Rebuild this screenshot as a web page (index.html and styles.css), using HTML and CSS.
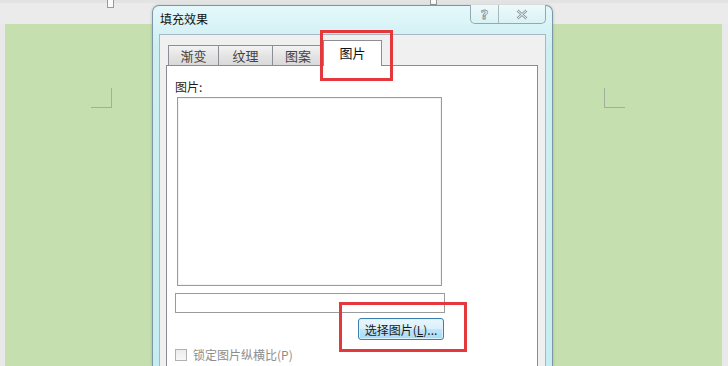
FILE: index.html
```html
<!DOCTYPE html>
<html>

<head>
    <title>填充效果</title>
    <link rel="stylesheet" href="styles.css">
</head>

<body>
    <div class="ruler">
        <span class="marker"></span>
        <span class="marker marker-right"></span>
    </div>

    <div class="page">
        <span class="corner corner-left"></span>
        <span class="corner corner-right"></span>
    </div>

    <!-- dialog window over the document -->
    <div class="dialog">
        <div class="titlebar">
            <span class="title">填充效果</span>
            <div class="caption-btns">
                <span class="cap-btn help">?</span>
                <span class="cap-btn close">
                    <svg width="12" height="11" viewBox="0 0 12 11">
                        <path d="M1.5 1.5 L10.5 9.5 M10.5 1.5 L1.5 9.5" stroke="#8e9aa2" stroke-width="2.6" fill="none" />
                        <path d="M1.5 1.5 L10.5 9.5 M10.5 1.5 L1.5 9.5" stroke="#f4f8f9" stroke-width="1" fill="none" />
                    </svg>
                </span>
            </div>
        </div>

        <div class="client">
            <div class="tabs">
                <span class="tab t1">渐变</span>
                <span class="tab t2">纹理</span>
                <span class="tab t3">图案</span>
                <span class="tab active">图片</span>
            </div>
            <div class="panel">
                <div class="label">图片:</div>
                <div class="preview"></div>
                <div class="textbox"></div>
                <button class="pick-btn">选择图片(<u>L</u>)...</button>
                <div class="check-row">
                    <span class="checkbox"></span>
                    <span class="check-label">锁定图片纵横比(P)</span>
                </div>
            </div>
        </div>
    </div>

    <!-- highlight boxes -->
    <div class="highlight hl-tab"></div>
    <div class="highlight hl-btn"></div>
</body>

</html>
```

FILE: styles.css
```css
/* Base */
body {
    margin: 0;
    width: 728px;
    height: 366px;
    overflow: hidden;
    position: relative;
    background: #e9e9e9;
    font-family: "Noto Sans CJK SC", "Noto Sans", sans-serif;
    font-size: 12px;
    color: #1e1e1e;
}

/* Top ruler strip */
.ruler {
    height: 24px;
    display: flex;
    align-items: flex-start;
    padding-left: 107px;
    box-sizing: border-box;
    background: linear-gradient(#e3e3e3 0, #e3e3e3 3px, #ebebeb 3px);
}

.marker {
    width: 5px;
    height: 7px;
    border: 1px solid #9a9a9a;
    border-top: none;
    background: #fafafa;
}

.marker-right {
    margin-left: 316px;
    height: 4px;
}

/* Green document page */
.page {
    height: 342px;
    margin: 0 6px 0 5px;
    background: #c5dfae;
    display: flex;
    justify-content: space-between;
    align-items: flex-start;
    padding: 64px 97px 0 86px;
    box-sizing: border-box;
}

.corner {
    width: 20px;
    height: 19px;
    border-bottom: 1px solid #a2aea0;
}

.corner-left {
    border-right: 1px solid #a2aea0;
}

.corner-right {
    border-left: 1px solid #a2aea0;
}

/* Dialog window */
.dialog {
    position: absolute;
    left: 152px;
    top: 5px;
    width: 401px;
    height: 361px;
    box-sizing: border-box;
    border: 1px solid #7f97a3;
    border-bottom: none;
    border-radius: 7px 7px 0 0;
    background: linear-gradient(#e4f8fa, #cdeff3 40px, #c6edf1);
    padding: 0 6px;
    display: flex;
    flex-direction: column;
    box-shadow: 0 0 3px rgba(80, 110, 120, 0.35);
}

.titlebar {
    height: 28px;
    display: flex;
    justify-content: space-between;
    align-items: flex-start;
    flex-shrink: 0;
}

.title {
    margin-top: 4px;
    padding-left: 1px;
    font-size: 12px;
    line-height: 17px;
    color: #111;
}

.caption-btns {
    display: flex;
    margin-top: -1px;
    height: 18px;
    border: 1px solid #95a8b2;
    border-top: none;
    border-radius: 0 0 5px 5px;
    background: linear-gradient(#eefafb, #d9f2f4);
    overflow: hidden;
}

.cap-btn {
    display: flex;
    align-items: center;
    justify-content: center;
}

.help {
    width: 27px;
    border-right: 1px solid #a8b9c1;
    font-family: "DejaVu Sans", sans-serif;
    font-size: 13px;
    font-weight: bold;
    color: #f4f8f9;
    -webkit-text-stroke: 0.8px #7f8d95;
}

.close {
    width: 46px;
}

/* Client area */
.client {
    flex: 1;
    min-height: 0;
    overflow: hidden;
    background: #f0f0f0;
    border: 1px solid #a9b8bf;
    border-bottom: none;
    padding: 5px 7px 0 6px;
    display: flex;
    flex-direction: column;
}

.tabs {
    height: 25px;
    display: flex;
    align-items: flex-end;
    padding-left: 2px;
    flex-shrink: 0;
    position: relative;
    z-index: 1;
}

.tab {
    height: 20px;
    box-sizing: border-box;
    border: 1px solid #8c8e94;
    border-bottom: none;
    background: linear-gradient(#f3f3f3, #e3e3e3 55%, #d9d9d9);
    font-size: 13px;
    color: #444;
    display: flex;
    align-items: center;
    justify-content: center;
    margin-left: -1px;
}

.t1 {
    margin-left: 0;
    width: 51px;
}

.t2 {
    width: 55px;
}

.t3 {
    width: 52px;
}

.tab.active {
    width: 59px;
    height: 26px;
    margin-bottom: -1px;
    background: #fff;
    color: #111;
    padding-bottom: 3px;
}

/* Tab page */
.panel {
    flex: 1;
    background: #fff;
    border: 1px solid #898c95;
    border-bottom: none;
    padding: 12px 0 0 8px;
}

.label {
    line-height: 17px;
    font-size: 12px;
}

.preview {
    width: 265px;
    height: 189px;
    box-sizing: border-box;
    margin: 2px 0 0 2px;
    border: 1px solid #9b9b9b;
    box-shadow: inset 0 0 0 1px #f4f4f4;
}

.textbox {
    width: 270px;
    height: 20px;
    box-sizing: border-box;
    margin-top: 7px;
    border: 1px solid #9b9b9b;
}

.pick-btn {
    display: block;
    width: 86px;
    height: 22px;
    margin: 5px 0 0 183px;
    padding: 0;
    border: 1px solid #3c7fb1;
    border-radius: 3px;
    background: linear-gradient(#eaf6fd, #d9f0fc 50%, #bee6fd 51%, #a7d9f5);
    box-shadow: inset 0 0 0 1px #d9f2fb;
    font-family: "Noto Sans CJK SC", "Noto Sans", sans-serif;
    font-size: 12px;
    color: #1a1a1a;
}

.check-row {
    margin-top: 8px;
    display: flex;
    align-items: center;
    gap: 6px;
}

.checkbox {
    width: 12px;
    height: 12px;
    box-sizing: border-box;
    border: 1px solid #b1b1b1;
    background: linear-gradient(#ececec, #f8f8f8);
}

.check-label {
    color: #8d8d8d;
    font-size: 12px;
    line-height: 14px;
}

/* Red highlight boxes */
.highlight {
    position: absolute;
    border: 3px solid #e4393c;
    box-sizing: border-box;
    z-index: 5;
}

.hl-tab {
    left: 320px;
    top: 30px;
    width: 73px;
    height: 51px;
}

.hl-btn {
    left: 339px;
    top: 302px;
    width: 128px;
    height: 50px;
}
```
